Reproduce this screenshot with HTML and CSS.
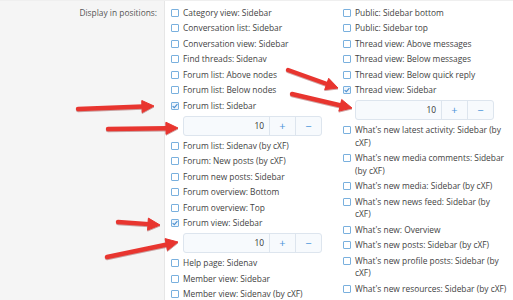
FILE: index.html
```html
<!DOCTYPE html>
<html lang="en">
<head>
  <meta charset="UTF-8" />
  <title>Widget positions</title>
  <link rel="stylesheet" href="styles.css">
</head>
<body>
  <div class="form-row">
    <div class="form-label">Display in positions:</div>
    <div class="form-inputs">
      <ul class="choices">
        <li><span class="box"></span><span>Category view: Sidebar</span></li>
        <li><span class="box"></span><span>Conversation list: Sidebar</span></li>
        <li><span class="box"></span><span>Conversation view: Sidebar</span></li>
        <li><span class="box"></span><span>Find threads: Sidenav</span></li>
        <li><span class="box"></span><span>Forum list: Above nodes</span></li>
        <li><span class="box"></span><span>Forum list: Below nodes</span></li>
        <li><span class="box checked"><svg viewBox="0 0 8 8"><path d="M1.6 4.1 3.3 5.7 6.4 2.2"/></svg></span><span>Forum list: Sidebar</span></li>
        <li class="spin-row"><div class="spin"><span class="spin-val">10</span><span class="spin-btn">+</span><span class="spin-btn">&minus;</span></div></li>
        <li><span class="box"></span><span>Forum list: Sidenav (by cXF)</span></li>
        <li><span class="box"></span><span>Forum: New posts (by cXF)</span></li>
        <li><span class="box"></span><span>Forum new posts: Sidebar</span></li>
        <li><span class="box"></span><span>Forum overview: Bottom</span></li>
        <li><span class="box"></span><span>Forum overview: Top</span></li>
        <li><span class="box checked"><svg viewBox="0 0 8 8"><path d="M1.6 4.1 3.3 5.7 6.4 2.2"/></svg></span><span>Forum view: Sidebar</span></li>
        <li class="spin-row"><div class="spin"><span class="spin-val">10</span><span class="spin-btn">+</span><span class="spin-btn">&minus;</span></div></li>
        <li><span class="box"></span><span>Help page: Sidenav</span></li>
        <li><span class="box"></span><span>Member view: Sidebar</span></li>
        <li><span class="box"></span><span>Member view: Sidenav (by cXF)</span></li>
      </ul>
      <ul class="choices">
        <li><span class="box"></span><span>Public: Sidebar bottom</span></li>
        <li><span class="box"></span><span>Public: Sidebar top</span></li>
        <li><span class="box"></span><span>Thread view: Above messages</span></li>
        <li><span class="box"></span><span>Thread view: Below messages</span></li>
        <li><span class="box"></span><span>Thread view: Below quick reply</span></li>
        <li><span class="box checked"><svg viewBox="0 0 8 8"><path d="M1.6 4.1 3.3 5.7 6.4 2.2"/></svg></span><span>Thread view: Sidebar</span></li>
        <li class="spin-row"><div class="spin"><span class="spin-val">10</span><span class="spin-btn">+</span><span class="spin-btn">&minus;</span></div></li>
        <li><span class="box"></span><span>What's new latest activity: Sidebar (by cXF)</span></li>
        <li><span class="box"></span><span>What's new media comments: Sidebar (by cXF)</span></li>
        <li><span class="box"></span><span>What's new media: Sidebar (by cXF)</span></li>
        <li><span class="box"></span><span>What's new news feed: Sidebar (by cXF)</span></li>
        <li><span class="box"></span><span>What's new: Overview</span></li>
        <li><span class="box"></span><span>What's new posts: Sidebar (by cXF)</span></li>
        <li><span class="box"></span><span>What's new profile posts: Sidebar (by cXF)</span></li>
        <li><span class="box"></span><span>What's new resources: Sidebar (by cXF)</span></li>
      </ul>
    </div>
  </div>

  <!-- red annotation arrows drawn over the form -->
  <svg class="arrows" viewBox="0 0 513 300" width="513" height="300">
    <g class="arrow">
      <line x1="78" y1="109" x2="143" y2="106.5"/>
      <polygon points="154,106 142.2,112.5 141.8,100.5"/>
    </g>
    <g class="arrow">
      <line x1="108" y1="129" x2="167" y2="128.2"/>
      <polygon points="178,128 166.1,134.2 165.9,122.2"/>
    </g>
    <g class="arrow">
      <line x1="118" y1="222" x2="149" y2="224.1"/>
      <polygon points="160,225 147.6,230.1 148.4,218.1"/>
    </g>
    <g class="arrow">
      <line x1="107" y1="257" x2="167" y2="244.5"/>
      <polygon points="178,242 167.5,250.4 165.1,238.6"/>
    </g>
    <g class="arrow">
      <line x1="288" y1="70" x2="327" y2="84"/>
      <polygon points="338,88 324.7,89.6 328.7,78.3"/>
    </g>
    <g class="arrow">
      <line x1="292" y1="94" x2="341" y2="105.5"/>
      <polygon points="352,108 338.9,111.1 341.7,99.5"/>
    </g>
  </svg>
</body>
</html>
```

FILE: styles.css
```css
body { margin: 0; height: 300px; overflow: hidden; background: #fff; font-family: "Open Sans", "Noto Sans", sans-serif; font-size: 8.4px; color: #434343; }
.form-row { display: grid; grid-template-columns: 165px 1fr; height: 300px; border-top: 1px solid #efefef; box-sizing: border-box; }
.form-label { background: #f5f5f5; border-right: 1px solid #e6e6e6; text-align: right; padding: 6px 7px 0 0; line-height: 12.5px; color: #555; }
.form-inputs { display: grid; grid-template-columns: 172px 1fr; padding: 4px 6px 0 6px; }
.choices { list-style: none; margin: 0; padding: 0; }
.choices li { display: flex; align-items: flex-start; gap: 4px; padding: 1.5px 0; line-height: 12.5px; }
.box { flex: none; width: 8px; height: 8px; margin-top: 2.2px; border: 1px solid #79b0de; border-radius: 1px; background: #fff; box-sizing: border-box; position: relative; }
.box svg { position: absolute; left: -1px; top: -1px; width: 8px; height: 8px; fill: none; stroke: #4b8fcf; stroke-width: 1.1; }
.box.checked { background: #eef5fc; }
.spin-row { padding: 2px 0 2.5px 12px !important; }
.spin { display: flex; width: 139px; height: 20px; border: 1px solid #dde5ee; border-radius: 3px; background: #f7fafd; box-sizing: border-box; }
.spin-val { flex: 1; text-align: right; padding-right: 5px; line-height: 18px; color: #333; }
.spin-btn { width: 25px; border-left: 1px solid #dde5ee; text-align: center; line-height: 18px; color: #4a93d9; font-size: 11px; }
.arrows { position: absolute; left: 0; top: 0; pointer-events: none; }
.arrow line { stroke: #e8352f; stroke-width: 4.4; stroke-linecap: round; }
.arrow polygon { fill: #e8352f; stroke: #e8352f; stroke-width: 1; stroke-linejoin: round; }
.arrow { filter: drop-shadow(0 1px 0.6px rgba(120, 0, 0, 0.35)); }
```
